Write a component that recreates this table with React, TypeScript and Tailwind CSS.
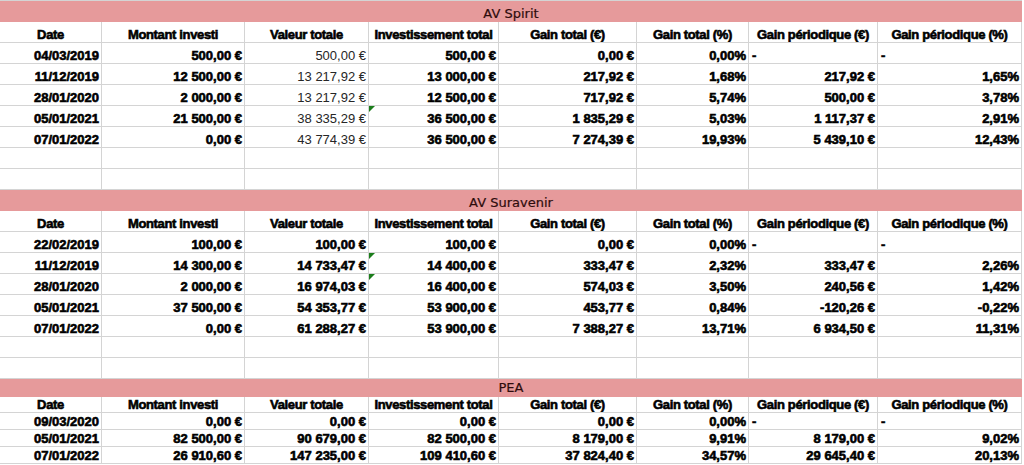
import clsx from "clsx";

type Section = {
  title: string;
  compact?: boolean;
  regularValeur?: boolean;
  flagged?: number[];
  empty: number;
  rows: string[][];
};

const sections: Section[] = [
  {
    title: "AV Spirit",
    regularValeur: true,
    flagged: [3],
    empty: 2,
    rows: [
      ["04/03/2019", "500,00 €", "500,00 €", "500,00 €", "0,00 €", "0,00%", "-", "-"],
      ["11/12/2019", "12 500,00 €", "13 217,92 €", "13 000,00 €", "217,92 €", "1,68%", "217,92 €", "1,65%"],
      ["28/01/2020", "2 000,00 €", "13 217,92 €", "12 500,00 €", "717,92 €", "5,74%", "500,00 €", "3,78%"],
      ["05/01/2021", "21 500,00 €", "38 335,29 €", "36 500,00 €", "1 835,29 €", "5,03%", "1 117,37 €", "2,91%"],
      ["07/01/2022", "0,00 €", "43 774,39 €", "36 500,00 €", "7 274,39 €", "19,93%", "5 439,10 €", "12,43%"],
    ],
  },
  {
    title: "AV Suravenir",
    flagged: [1, 2],
    empty: 2,
    rows: [
      ["22/02/2019", "100,00 €", "100,00 €", "100,00 €", "0,00 €", "0,00%", "-", "-"],
      ["11/12/2019", "14 300,00 €", "14 733,47 €", "14 400,00 €", "333,47 €", "2,32%", "333,47 €", "2,26%"],
      ["28/01/2020", "2 000,00 €", "16 974,03 €", "16 400,00 €", "574,03 €", "3,50%", "240,56 €", "1,42%"],
      ["05/01/2021", "37 500,00 €", "54 353,77 €", "53 900,00 €", "453,77 €", "0,84%", "-120,26 €", "-0,22%"],
      ["07/01/2022", "0,00 €", "61 288,27 €", "53 900,00 €", "7 388,27 €", "13,71%", "6 934,50 €", "11,31%"],
    ],
  },
  {
    title: "PEA",
    compact: true,
    empty: 0,
    rows: [
      ["09/03/2020", "0,00 €", "0,00 €", "0,00 €", "0,00 €", "0,00%", "-", "-"],
      ["05/01/2021", "82 500,00 €", "90 679,00 €", "82 500,00 €", "8 179,00 €", "9,91%", "8 179,00 €", "9,02%"],
      ["07/01/2022", "26 910,60 €", "147 235,00 €", "109 410,60 €", "37 824,40 €", "34,57%", "29 645,40 €", "20,13%"],
    ],
  },
];

const headers = [
  "Date",
  "Montant investi",
  "Valeur totale",
  "Investissement total",
  "Gain total (€)",
  "Gain total (%)",
  "Gain périodique (€)",
  "Gain périodique (%)",
];

const gridCols =
  "grid w-[1022px] grid-cols-[102px_143px_124px_130px_138px_112px_129px_144px]";
const cellBase =
  "relative flex items-end overflow-hidden whitespace-nowrap border-r border-b border-[#d4d4d4] leading-[15px]";
const bold = "font-bold text-black [-webkit-text-stroke:0.6px_#000]";

function Flag() {
  return (
    <svg className="absolute left-0 top-0" width="6" height="6" viewBox="0 0 6 6">
      <polygon points="0,0 6,0 0,6" fill="#1b7d1b" />
    </svg>
  );
}

function SectionBlock({ s }: { s: Section }) {
  const rowH = s.compact ? "h-[17px]" : "h-[21px]";
  return (
    <div>
      <div
        className={clsx(
          "flex w-[1022px] items-end justify-center bg-[#e69a9b] font-['DejaVu_Sans',sans-serif] text-[13px] leading-[15px] text-[#2e0c0c] [-webkit-text-stroke:0.2px_#2e0c0c]",
          s.compact ? "h-[18px] pb-[2px]" : "h-[21px] pb-px",
        )}
      >
        {s.title}
      </div>

      <div className={clsx(gridCols, s.compact ? "h-[16px]" : "h-[21px]")}>
        {headers.map((h) => (
          <div key={h} className={clsx(cellBase, bold, "justify-center tracking-[-0.35px]")}>
            {h}
          </div>
        ))}
      </div>

      {s.rows.map((row, ri) => (
        <div key={ri} className={clsx(gridCols, rowH)}>
          {row.map((v, ci) => {
            const regular = s.regularValeur && ci === 2;
            const dash = v === "-";
            return (
              <div
                key={ci}
                className={clsx(
                  cellBase,
                  regular ? "font-normal text-[#262626]" : bold,
                  dash ? "justify-start pl-[3px]" : "justify-end pr-[2px]",
                )}
              >
                {ci === 3 && s.flagged?.includes(ri) && <Flag />}
                {v}
              </div>
            );
          })}
        </div>
      ))}

      {Array.from({ length: s.empty }).map((_, i) => (
        <div key={`e${i}`} className={clsx(gridCols, rowH)}>
          {headers.map((h) => (
            <div key={h} className={cellBase} />
          ))}
        </div>
      ))}
    </div>
  );
}

export default function App() {
  return (
    <div className="h-[465px] w-[1024px] overflow-hidden bg-white font-['Liberation_Sans',Arial,sans-serif] text-[13px]">
      <div className="w-[1022px] border-t border-[#d4d4d4]">
        {sections.map((s) => (
          <SectionBlock key={s.title} s={s} />
        ))}
      </div>
    </div>
  );
}
